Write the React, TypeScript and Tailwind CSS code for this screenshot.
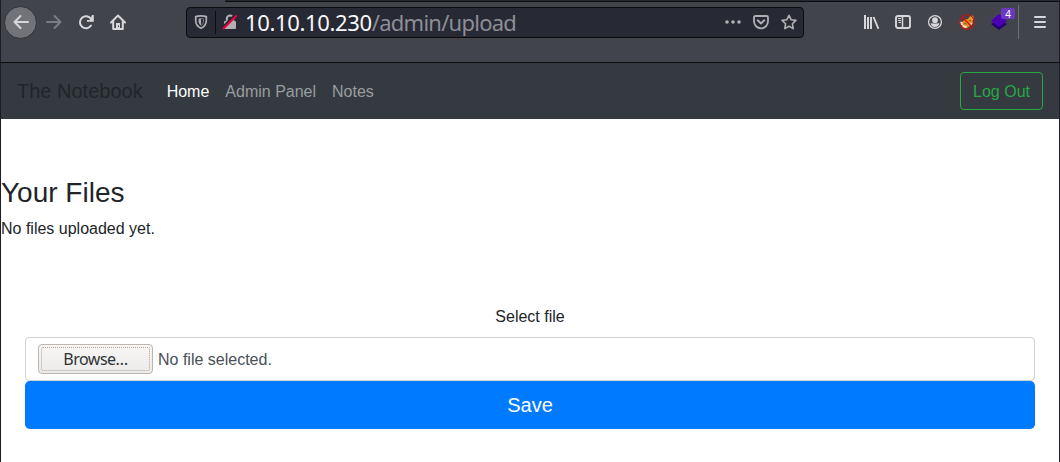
import type { ReactNode } from "react";

function Icon({ children, className = "" }: { children: ReactNode; className?: string }) {
  return (
    <svg viewBox="0 0 16 16" fill="none" stroke="currentColor" className={`size-4 shrink-0 ${className}`}>
      {children}
    </svg>
  );
}

function AddressBar() {
  return (
    <div className="ml-[60px] flex h-[31px] w-[618px] items-center rounded-[4px] border border-[#0c0c0d] bg-[#272935] pl-[6px] text-[#b1b1b3]">
      <Icon>
        <path d="M8 1.800c2 0 4 .3 5.300.8v4c0 3.800-2 6.200-5.300 7.600-3.300-1.400-5.300-3.800-5.300-7.600v-4C4 2.100 6 1.800 8 1.800z" strokeWidth="1.700" />
        <path d="M8 4.400c-1 0-1.800.1-2.400.4v2.500c0 1.800.9 3.200 2.400 4.200z" fill="currentColor" stroke="none" />
        <path d="M8 4.400c1 0 1.800.1 2.400.4v2.500c0 1.800-.9 3.200-2.400 4.200" strokeWidth=".6" />
      </Icon>
      <div className="ml-[6px] h-[23px] w-px bg-[#0c0c0d]" />
      <Icon className="ml-[6px]">
        <path d="M4.800 8V4.800a3.200 3.200 0 0 1 6.400 0V8" strokeWidth="2" />
        <rect x="2" y="7" width="12" height="8" rx="1" fill="currentColor" stroke="none" />
        <path d="M0 14 13.500.5" stroke="#272935" strokeWidth="2.500" />
        <path d="M1.200 15 14.800 1.400" stroke="#f5003d" strokeWidth="2" />
      </Icon>
      <div className="ml-[7px] grow whitespace-nowrap font-['Noto_Sans',sans-serif] text-[22px] leading-[29px] text-[#8d8e95]">
        <span className="tracking-[-0.35px] text-[#f9f9fa]">10.10.10.230</span>
        <span className="tracking-[-0.75px]">/admin/upload</span>
      </div>
      <div className="flex items-center gap-3 pr-[6px]">
        <Icon>
          <g fill="currentColor" stroke="none">
            <circle cx="2" cy="8" r="1.800" />
            <circle cx="8" cy="8" r="1.800" />
            <circle cx="14" cy="8" r="1.800" />
          </g>
        </Icon>
        <Icon>
          <path d="M2.300 2h11.400c.7 0 1.300.6 1.300 1.300v4A7 7 0 0 1 8 14.300a7 7 0 0 1-7-7v-4C1 2.600 1.600 2 2.300 2z" strokeWidth="1.800" />
          <path d="m4.700 6.300 3.300 3.200 3.300-3.200" strokeWidth="1.900" strokeLinecap="round" strokeLinejoin="round" />
        </Icon>
        <Icon>
          <path d="m8 1.300 2.100 4.400 4.800.7-3.500 3.400.8 4.800L8 12.300l-4.200 2.300.8-4.800L1.100 6.400l4.800-.7z" strokeWidth="1.600" strokeLinejoin="round" />
        </Icon>
      </div>
    </div>
  );
}

function Extensions() {
  return (
    <div className="ml-auto flex items-center text-[#d7d7db]">
      <Icon>
        <g fill="currentColor" stroke="none">
          <rect x="1" y="1" width="2" height="14" />
          <rect x="4" y="3" width="2" height="12" />
          <rect x="7" y="3" width="2" height="12" />
        </g>
        <path d="m10.500 3 5 12" strokeWidth="1.900" />
      </Icon>
      <Icon className="ml-4">
        <rect x="1" y="2" width="14" height="12" rx="2" strokeWidth="1.900" />
        <path d="M7.500 2v12" strokeWidth="1.500" />
        <path d="M3 4.500h3M3 6.500h3M3.500 8.500H6" strokeWidth="1" />
      </Icon>
      <Icon className="ml-4">
        <circle cx="8" cy="8" r="6.400" strokeWidth="1.300" />
        <circle cx="8" cy="6.200" r="2.900" fill="currentColor" stroke="none" />
        <path d="M3.600 9.200C4.800 9 6 9.600 8 9.600s3.200-.6 4.400-.4c-.3 2.200-2 3.800-4.400 3.800s-4.100-1.600-4.400-3.800z" fill="currentColor" stroke="none" />
      </Icon>
      <Icon className="ml-4">
        <path d="m3 8 3-2.500 3-.5 2-3 3 1.500-.5 4.500-2 3.500-4 3-4-.5-1-3z" fill="#e98a1d" stroke="none" />
        <path d="m11 2.500 3-1 1 4-3 1z" fill="#eda53d" stroke="none" />
        <path d="m.5 7.500 3 .5.500 3.500-2.500-1zM4 11l4 1-1 2-3-1zM11.500 9l2.500-.5-2 3z" fill="#eee6db" stroke="none" />
        <path d="m5.500 9.500 1.500.500M10.500 7l1.500-.500" stroke="#693b12" />
        <circle cx="8" cy="8" r="7.200" stroke="#cf1010" strokeWidth="1.100" />
        <path d="m3 3 10 10" stroke="#cf1010" strokeWidth="1.100" />
      </Icon>
      <div className="relative ml-4 size-4">
        <svg viewBox="0 0 16 16" className="h-4 w-4">
          <path d="m0 10 8-5 8 5-8 6z" fill="#21006f" />
          <path d="m0 7 8-7 8 7-8 6z" fill="#4b00b5" />
        </svg>
        <span className="absolute -top-[6px] left-[10px] flex h-[11px] w-[14px] items-center justify-center rounded-[2px] bg-[#6b39c2] font-['Noto_Sans',sans-serif] text-[10px] leading-none text-white">
          4
        </span>
      </div>
      <div className="ml-[11px] h-[34px] w-px bg-[#6d6e75]" />
      <Icon className="mr-[11px] ml-[13px]">
        <path d="M3 3h10M3 8h10M3 13h10" strokeWidth="2" strokeLinecap="round" />
      </Icon>
    </div>
  );
}

function BrowserToolbar() {
  return (
    <header className="h-[63px] shrink-0 border-b border-[#0c0c0d] bg-[#42444b]">
      <div className="flex h-[2px]">
        <div className="w-[224px]" />
        <div className="grow border-b border-[#0c0c0d] bg-[#272935]" />
      </div>
      <div className="flex h-[40px] items-center text-[#d7d7db]">
        <div className="ml-[3px] flex size-[33px] shrink-0 items-center justify-center rounded-full border border-[#303138] bg-[#727379]">
          <Icon>
            <path d="M15 8H1.500M7.500 2 1.500 8l6 6" strokeWidth="2" strokeLinecap="round" strokeLinejoin="round" />
          </Icon>
        </div>
        <Icon className="ml-[9px] text-[#7c7d82]">
          <path d="M1 8h13.500M8.500 2l6 6-6 6" strokeWidth="2" strokeLinecap="round" strokeLinejoin="round" />
        </Icon>
        <Icon className="ml-4">
          <path d="M13 5A6 6 0 1 0 13 11.500" strokeWidth="2" strokeLinecap="round" />
          <path d="M14 1h1.800v6.800H9V6h3z" fill="currentColor" stroke="none" />
        </Icon>
        <Icon className="ml-4">
          <path d="m1 8.500 7-7 7 7M3.200 7.500V15h9.600V7.500" strokeWidth="2" strokeLinecap="round" strokeLinejoin="round" />
          <path d="M6 15V9h4v6z" fill="currentColor" stroke="none" />
          <path d="M8.500 11.500v1.500" stroke="#42444b" />
        </Icon>
        <AddressBar />
        <Extensions />
      </div>
    </header>
  );
}

export default function App() {
  return (
    <div className="flex h-[462px] w-[1060px] flex-col overflow-hidden border-x border-[#1c1d26] bg-white font-['Liberation_Sans',Arial,sans-serif] text-base leading-6 text-[#212529]">
      <BrowserToolbar />
      <nav className="flex h-14 shrink-0 items-center bg-[#343a40] px-4">
        <a className="mr-4 text-[20px] leading-[30px]">The Notebook</a>
        <div className="flex pt-px text-[#9a9da0]">
          <a className="px-2 pt-px text-white">Home</a>
          <a className="px-2 pt-px">Admin Panel</a>
          <a className="px-2 pt-px">Notes</a>
        </div>
        <button className="ml-auto h-[38px] rounded border border-[#28a745] px-3 pt-[2px] text-[#28a745]">
          Log Out
        </button>
      </nav>
      <main className="pt-[57px]">
        <h1 className="mb-[7px] text-[28px] leading-[34px] font-normal">Your Files</h1>
        <p>No files uploaded yet.</p>
        <form className="mt-16 flex flex-col px-6">
          <label className="mb-2 text-center">Select file</label>
          <div className="flex h-11 items-center rounded border border-[#ced4da] px-3 text-[#495057]">
            <button
              type="button"
              className="h-[30px] w-[115px] rounded-[4px] border border-[#bdb4ad] bg-linear-to-b from-[#f7f6f5] to-[#edebe9] p-[2px] font-['Noto_Sans',sans-serif] text-[16px] tracking-[-0.5px] text-[#2e3436]"
            >
              <span className="flex h-full items-center justify-center rounded-[2px] border border-dotted border-[#a9a6a4]">
                Browse…
              </span>
            </button>
            <span className="ml-[5px] pt-[2px]">No file selected.</span>
          </div>
          <button type="button" className="h-12 rounded-[4.800px] bg-[#007bff] text-[20px] text-white">
            Save
          </button>
        </form>
      </main>
    </div>
  );
}
